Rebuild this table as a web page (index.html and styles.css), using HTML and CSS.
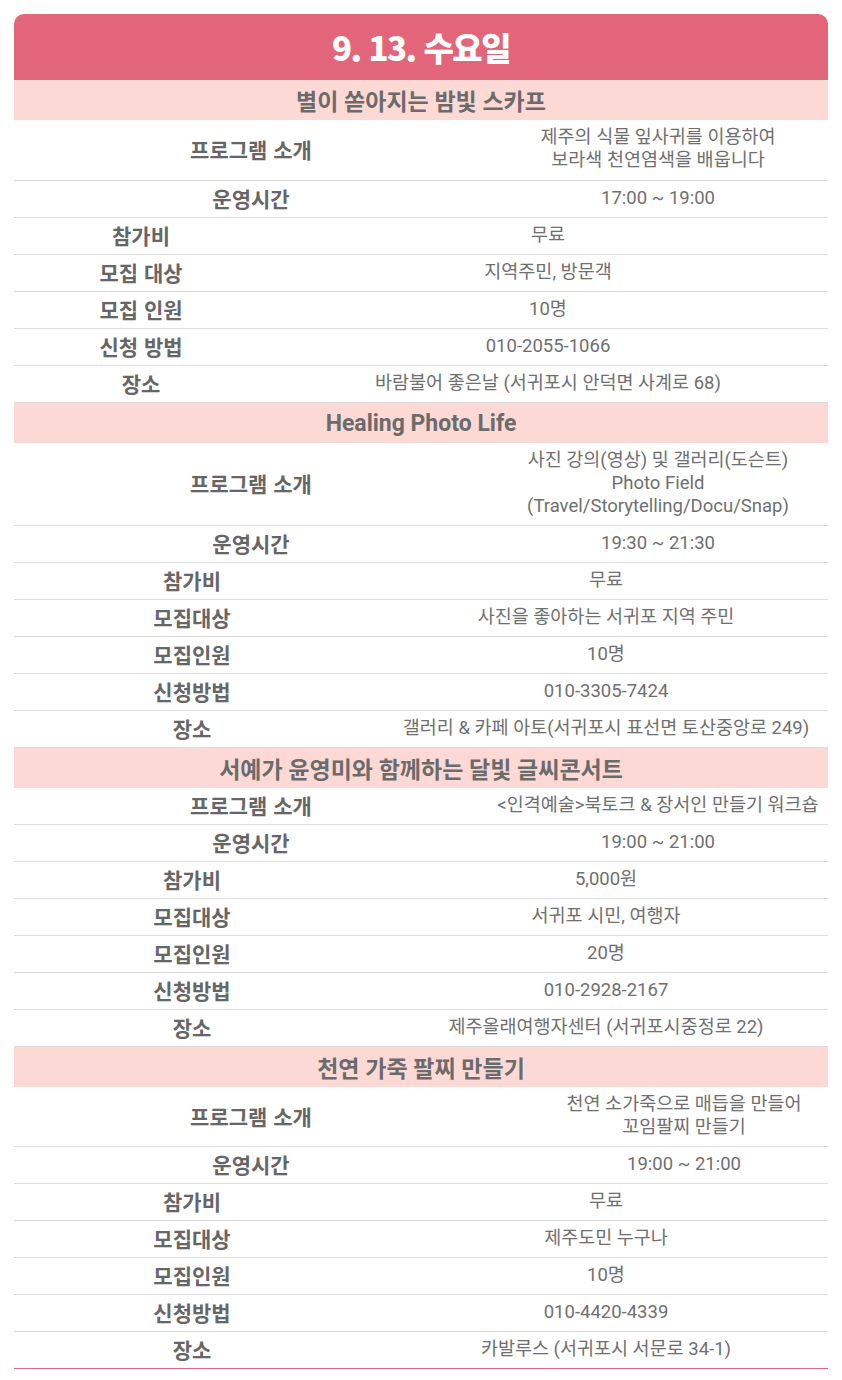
FILE: index.html
```html
<!DOCTYPE html>
<html lang="ko">
<head>
<meta charset="utf-8">
<title>9. 13. 수요일</title>
<link rel="stylesheet" href="styles.css">
</head>
<body>
<div class="schedule">
  <div class="day-title">9. 13. 수요일</div>

  <div class="sec-title">별이 쏟아지는 밤빛 스카프</div>
  <div class="row ra first"><div class="lb">프로그램 소개</div><div class="vl">제주의 식물 잎사귀를 이용하여<br>보라색 천연염색을 배웁니다</div></div>
  <div class="row ra"><div class="lb">운영시간</div><div class="vl">17:00 ~ 19:00</div></div>
  <div class="row rb"><div class="lb">참가비</div><div class="vl">무료</div></div>
  <div class="row rb"><div class="lb">모집 대상</div><div class="vl">지역주민, 방문객</div></div>
  <div class="row rb"><div class="lb">모집 인원</div><div class="vl">10명</div></div>
  <div class="row rb"><div class="lb">신청 방법</div><div class="vl">010-2055-1066</div></div>
  <div class="row rb"><div class="lb">장소</div><div class="vl">바람불어 좋은날 (서귀포시 안덕면 사계로 68)</div></div>

  <div class="sec-title">Healing Photo Life</div>
  <div class="row ra"><div class="lb">프로그램 소개</div><div class="vl">사진 강의(영상) 및 갤러리(도슨트)<br>Photo Field<br>(Travel/Storytelling/Docu/Snap)</div></div>
  <div class="row ra"><div class="lb">운영시간</div><div class="vl">19:30 ~ 21:30</div></div>
  <div class="row rc"><div class="lb">참가비</div><div class="vl">무료</div></div>
  <div class="row rc"><div class="lb">모집대상</div><div class="vl">사진을 좋아하는 서귀포 지역 주민</div></div>
  <div class="row rc"><div class="lb">모집인원</div><div class="vl">10명</div></div>
  <div class="row rc"><div class="lb">신청방법</div><div class="vl">010-3305-7424</div></div>
  <div class="row rc"><div class="lb">장소</div><div class="vl">갤러리 &amp; 카페 아토(서귀포시 표선면 토산중앙로 249)</div></div>

  <div class="sec-title">서예가 윤영미와 함께하는 달빛 글씨콘서트</div>
  <div class="row ra"><div class="lb">프로그램 소개</div><div class="vl">&lt;인격예술&gt;북토크 &amp; 장서인 만들기 워크숍</div></div>
  <div class="row ra"><div class="lb">운영시간</div><div class="vl">19:00 ~ 21:00</div></div>
  <div class="row rc"><div class="lb">참가비</div><div class="vl">5,000원</div></div>
  <div class="row rc"><div class="lb">모집대상</div><div class="vl">서귀포 시민, 여행자</div></div>
  <div class="row rc"><div class="lb">모집인원</div><div class="vl">20명</div></div>
  <div class="row rc"><div class="lb">신청방법</div><div class="vl">010-2928-2167</div></div>
  <div class="row rc"><div class="lb">장소</div><div class="vl">제주올래여행자센터 (서귀포시중정로 22)</div></div>

  <div class="sec-title">천연 가죽 팔찌 만들기</div>
  <div class="row rd"><div class="lb">프로그램 소개</div><div class="vl">천연 소가죽으로 매듭을 만들어<br>꼬임팔찌 만들기</div></div>
  <div class="row rd"><div class="lb">운영시간</div><div class="vl">19:00 ~ 21:00</div></div>
  <div class="row rc"><div class="lb">참가비</div><div class="vl">무료</div></div>
  <div class="row rc"><div class="lb">모집대상</div><div class="vl">제주도민 누구나</div></div>
  <div class="row rc"><div class="lb">모집인원</div><div class="vl">10명</div></div>
  <div class="row rc"><div class="lb">신청방법</div><div class="vl">010-4420-4339</div></div>
  <div class="row rc last"><div class="lb">장소</div><div class="vl">카발루스 (서귀포시 서문로 34-1)</div></div>
</div>
</body>
</html>
```

FILE: styles.css
```css
html, body {
  margin: 0;
  padding: 0;
  background: #ffffff;
}
body {
  font-family: "Noto Sans CJK KR", "Noto Sans", sans-serif;
  color: #6b6b6b;
}
.schedule {
  margin: 14px 14px 0 14px;
  width: 814px;
}
.day-title {
  height: 66px;
  background: #e2657a;
  border-radius: 10px 10px 0 0;
  color: #ffffff;
  font-size: 33px;
  font-weight: 900;
  letter-spacing: -1.5px;
  display: flex;
  align-items: center;
  justify-content: center;
}
.sec-title {
  height: 40px;
  background: #fdd9d6;
  display: flex;
  align-items: center;
  justify-content: center;
  font-family: "Roboto", "Noto Sans CJK KR", sans-serif;
  font-size: 23px;
  font-weight: 700;
  color: #6b6b6b;
}
.row {
  display: grid;
  border-bottom: 1px solid #dcdcdc;
  line-height: 23px;
}
.row.first .lb, .row.first .vl {
  padding-bottom: 8px;
}
.row.last {
  border-bottom-color: #d9697d;
}
.lb, .vl {
  padding: 6px 0 7px 0;
  text-align: center;
  display: flex;
  flex-direction: column;
  justify-content: center;
}
.lb {
  font-size: 21px;
  font-weight: 700;
  color: #666666;
}
.vl {
  font-family: "Roboto", "Noto Sans CJK KR", sans-serif;
  font-size: 18.5px;
  font-weight: 400;
  color: #6f6f6f;
  white-space: nowrap;
}
.ra { grid-template-columns: 474px 1fr; }
.rb { grid-template-columns: 254px 1fr; }
.rc { grid-template-columns: 356px 1fr; }
.rc .vl { padding-left: 14px; }
.rd { grid-template-columns: 474px 1fr; }
.rd .vl { padding-left: 52px; }
```
